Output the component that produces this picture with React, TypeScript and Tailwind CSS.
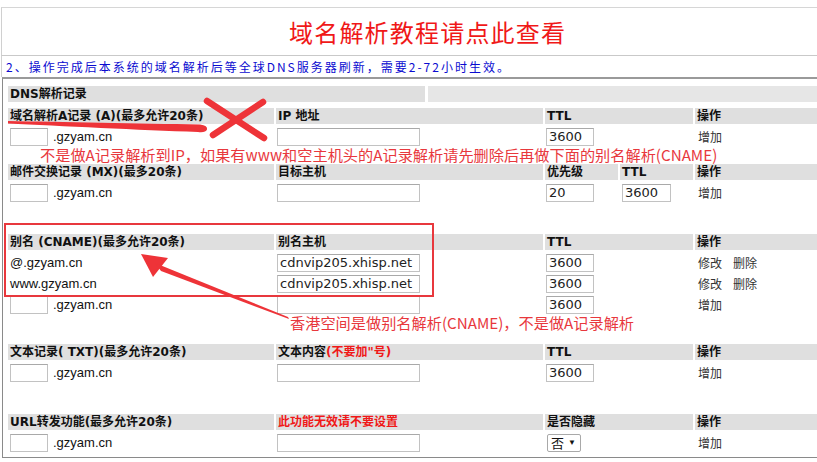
import React from 'react'

const GRID = 'grid grid-cols-[266px_267px_73px_73px_1fr] gap-x-[2px]'
const HEAD = "h-[16px] bg-[#dfdfdf] flex items-center pl-[2px] font-bold text-[12px] text-[#111] whitespace-nowrap font-['DejaVu_Sans','Noto_Sans_CJK_SC',sans-serif]"
const CELL = 'h-[21px] flex items-center whitespace-nowrap'

function Box({ w, value = '', ml = 'ml-[1px]' }: { w: string; value?: string; ml?: string }) {
  return (
    <div
      className={`${w} ${ml} h-[18px] bg-white border border-[#c2c2c2] border-t-[#a9a9a9] pl-[2px] flex items-center text-[13px] text-[#222] font-['DejaVu_Sans',sans-serif]`}
    >
      {value}
    </div>
  )
}

function Host() {
  return (
    <div className={CELL}>
      <Box w="w-[38px]" ml="ml-[2px]" />
      <span className="ml-[5px]">.gzyam.cn</span>
    </div>
  )
}

function Ops({ edit }: { edit?: boolean }) {
  return (
    <div className={`${CELL} pl-[3px] text-[12px] text-[#333] font-['Noto_Sans_CJK_SC',sans-serif]`}>
      {edit ? (
        <>
          <span>修改</span>
          <span className="ml-[11px]">删除</span>
        </>
      ) : (
        <span>增加</span>
      )}
    </div>
  )
}

function Header({ cols }: { cols: { label: React.ReactNode; span?: boolean }[] }) {
  return (
    <div className={`${GRID} mb-[2px]`}>
      {cols.map((c, i) => (
        <div key={i} className={`${HEAD} ${c.span ? 'col-span-2' : ''}`}>
          {c.label}
        </div>
      ))}
    </div>
  )
}

export default function App() {
  return (
    <div className="relative w-[817px] h-[462px] bg-white overflow-hidden text-[13px] text-[#111] font-['Liberation_Sans','Noto_Sans_CJK_SC',sans-serif]">
      <div className="h-[7px]" />
      <div className="h-[48px] border-t border-[#d6d6d6] border-l border-l-[#d0d0d0] ml-[1px] flex items-center pl-[287px]">
        <span className="text-[24px] tracking-[1.2px] text-[#f01818] font-['Noto_Sans_CJK_SC',sans-serif] leading-none">
          域名解析教程请点此查看
        </span>
      </div>
      <div className="h-[22px] border-t border-[#c9c9c9] border-l border-l-[#d0d0d0] ml-[1px] flex items-center pl-[4px]">
        <span className="text-[12px] tracking-[2px] text-[#0b0bd0] font-['Noto_Sans_CJK_SC',sans-serif] leading-none">
          2、操作完成后本系统的域名解析后等全球DNS服务器刷新，需要2-72小时生效。
        </span>
      </div>

      <div className="ml-[2px] border-t-2 border-t-[#9a9a9a] border-l border-l-[#8a8a8a] border-b border-b-[#8a8a8a] pt-[7px] pl-[5px] pb-[4px]">
        <div className="grid grid-cols-[417px_1fr] gap-x-[3px]">
          <div className={`${HEAD} bg-[#d9d9d9]`}>DNS解析记录</div>
          <div className="h-[16px] bg-[#e6e6e6]" />
        </div>

        {/* A */}
        <div className="mt-[6px]">
          <Header cols={[{ label: '域名解析A记录 (A)(最多允许20条)' }, { label: 'IP 地址' }, { label: 'TTL', span: true }, { label: '操作' }]} />
          <div className={GRID}>
            <Host />
            <div className={CELL}><Box w="w-[143px]" /></div>
            <div className={`${CELL} col-span-2`}><Box w="w-[48px]" value="3600" /></div>
            <Ops />
          </div>
        </div>

        {/* MX */}
        <div className="mt-[17px]">
          <Header cols={[{ label: '邮件交换记录 (MX)(最多20条)' }, { label: '目标主机' }, { label: '优先级' }, { label: 'TTL' }, { label: '操作' }]} />
          <div className={GRID}>
            <Host />
            <div className={CELL}><Box w="w-[143px]" /></div>
            <div className={CELL}><Box w="w-[48px]" value="20" /></div>
            <div className={CELL}><Box w="w-[49px]" value="3600" ml="ml-[2px]" /></div>
            <Ops />
          </div>
        </div>

        {/* CNAME */}
        <div className="mt-[31px]">
          <Header cols={[{ label: '别名 (CNAME)(最多允许20条)' }, { label: '别名主机' }, { label: 'TTL', span: true }, { label: '操作' }]} />
          {['@.gzyam.cn', 'www.gzyam.cn'].map((h) => (
            <div key={h} className={GRID}>
              <div className={`${CELL} pl-[2px]`}>{h}</div>
              <div className={CELL}><Box w="w-[143px]" value="cdnvip205.xhisp.net" /></div>
              <div className={`${CELL} col-span-2`}><Box w="w-[48px]" value="3600" /></div>
              <Ops edit />
            </div>
          ))}
          <div className={GRID}>
            <Host />
            <div className={CELL}><Box w="w-[143px]" /></div>
            <div className={`${CELL} col-span-2`}><Box w="w-[48px]" value="3600" /></div>
            <Ops />
          </div>
        </div>

        {/* TXT */}
        <div className="mt-[29px]">
          <Header
            cols={[
              { label: '文本记录( TXT)(最多允许20条)' },
              { label: <>文本内容<span className="text-[#f01818]">(不要加"号)</span></> },
              { label: 'TTL', span: true },
              { label: '操作' },
            ]}
          />
          <div className={GRID}>
            <Host />
            <div className={CELL}><Box w="w-[143px]" /></div>
            <div className={`${CELL} col-span-2`}><Box w="w-[48px]" value="3600" /></div>
            <Ops />
          </div>
        </div>

        {/* URL */}
        <div className="mt-[31px]">
          <Header
            cols={[
              { label: 'URL转发功能(最多允许20条)' },
              { label: <span className="text-[#f01818]">此功能无效请不要设置</span> },
              { label: '是否隐藏', span: true },
              { label: '操作' },
            ]}
          />
          <div className={GRID}>
            <Host />
            <div className={CELL}><Box w="w-[143px]" /></div>
            <div className={`${CELL} col-span-2`}>
              <div className="ml-[2px] w-[34px] h-[18px] bg-white border border-[#a9a9a9] rounded-[2px] flex items-center pl-[3px] gap-[4px]">
                <span className="text-[13px] font-['Noto_Sans_CJK_SC',sans-serif] leading-none">否</span>
                <span className="text-[8px] leading-none">▼</span>
              </div>
            </div>
            <Ops />
          </div>
        </div>
      </div>

      {/* annotations */}
      <div className="absolute left-[4px] top-[223px] w-[430px] h-[74px] border-[2.5px] border-[#e8383d] pointer-events-none" />
      <svg className="absolute left-0 top-0 pointer-events-none" width="817" height="462" viewBox="0 0 817 462">
        <path
          d="M8 121 C60 122 140 123.5 200 124.5 Q208 125.5 207 129.5 Q205.5 133 198 132 C140 130 60 126 8 123.5 Z"
          fill="#ee3338"
        />
        <line x1="207" y1="101" x2="264" y2="138" stroke="#ee3338" strokeWidth="6.5" strokeLinecap="round" />
        <line x1="263" y1="102" x2="213" y2="135" stroke="#ee3338" strokeWidth="6.5" strokeLinecap="round" />
        <polygon points="141,254 168,258 153,277" fill="#ee3338" />
        <polygon points="155,263 161,271 289,319 288,317" fill="#ee3338" />
      </svg>
      <div className="absolute left-[40px] top-[146px] text-[15.2px] leading-[16px] text-[#e8383d] whitespace-nowrap font-['Noto_Sans_CJK_SC',sans-serif]">
        不是做A记录解析到IP，如果有www和空主机头的A记录解析请先删除后再做下面的别名解析(CNAME)
      </div>
      <div className="absolute left-[290px] top-[314px] text-[15.2px] leading-[16px] text-[#e8383d] whitespace-nowrap font-['Noto_Sans_CJK_SC',sans-serif]">
        香港空间是做别名解析(CNAME)，不是做A记录解析
      </div>
    </div>
  )
}
